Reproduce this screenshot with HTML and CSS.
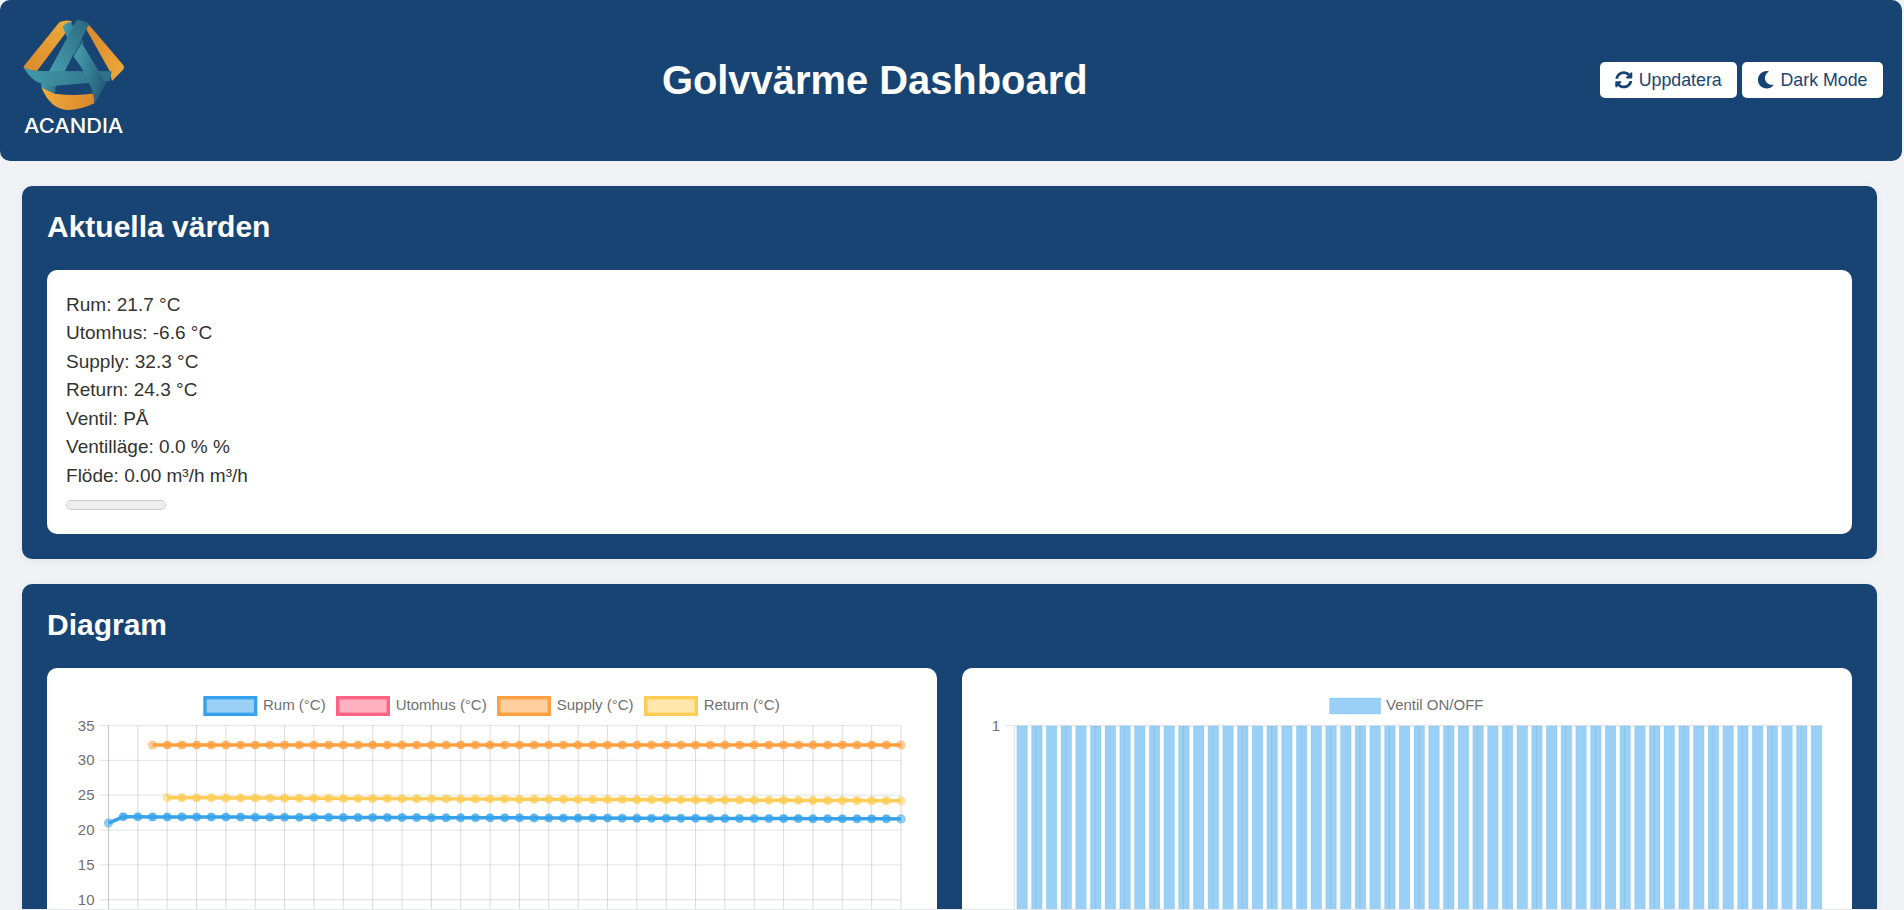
FILE: index.html
```html
<!DOCTYPE html>
<html lang="sv">
<head>
    <meta charset="UTF-8">
    <meta name="viewport" content="width=device-width, initial-scale=1.0">
    <title>Golvvärme Dashboard</title>
    <link rel="stylesheet" href="styles.css">
</head>
<body>
    <header class="top-bar">
        <svg class="logo" viewBox="60 60 375 360" role="img" aria-label="Acandia">
            <defs>
                <linearGradient id="orange-a" x1="0" y1="1" x2="1" y2="0">
                    <stop offset="0" stop-color="#db8a2c"/>
                    <stop offset="1" stop-color="#eeac3b"/>
                </linearGradient>
                <linearGradient id="orange-b" x1="0" y1="0" x2="1" y2="1">
                    <stop offset="0" stop-color="#d9862c"/>
                    <stop offset="1" stop-color="#eeac3b"/>
                </linearGradient>
                <linearGradient id="orange-c" x1="0" y1="0" x2="1" y2="0">
                    <stop offset="0" stop-color="#eeac3b"/>
                    <stop offset="1" stop-color="#d9862c"/>
                </linearGradient>
                <linearGradient id="teal-band" x1="0" y1="0" x2="1" y2="0">
                    <stop offset="0" stop-color="#429aa8"/>
                    <stop offset="1" stop-color="#2f7088"/>
                </linearGradient>
                <linearGradient id="teal-left" x1="0" y1="1" x2="1" y2="0">
                    <stop offset="0" stop-color="#46a0ad"/>
                    <stop offset="1" stop-color="#2b6781"/>
                </linearGradient>
                <linearGradient id="teal-right" x1="0" y1="0" x2="1" y2="0.4">
                    <stop offset="0" stop-color="#48a4b0"/>
                    <stop offset="1" stop-color="#27607c"/>
                </linearGradient>
            </defs>
            <path fill="url(#orange-a)" d="M178 67Q196 58 216 64L196 100L111 213Q90 212 73 206Q68 200 75 194Z"/>
            <path fill="url(#orange-b)" d="M257 85Q262 72 270 78L369 194Q375 202 369 209L336 243L329 213Z"/>
            <path fill="url(#orange-c)" d="M124 262L165 281Q225 290 285 280L283 310Q240 331 200 330Q150 326 124 262Z"/>
            <path fill="url(#teal-right)" d="M188 80Q198 68 212 66L252 128L225 172Z"/>
            <path fill="url(#teal-band)" d="M124 250L170 240L165 281L124 262Z"/>
            <path fill="url(#teal-left)" d="M230 60Q250 60 268 72L193 216H146Z"/>
            <path fill="url(#teal-band)" d="M70 201Q90 212 112 213L335 214L330 243L160 258Q130 256 108 244Q84 228 70 201Z"/>
            <path fill="url(#teal-right)" d="M221 170L246 130L318 250L283 311Q282 282 270 255Q254 212 221 170Z"/>
            <text class="logo-text" x="72" y="400" textLength="298" lengthAdjust="spacingAndGlyphs">ACANDIA</text>
        </svg>
        <h1 class="page-title">Golvvärme Dashboard</h1>
        <div class="top-actions">
            <button class="top-button">
                <svg class="button-icon" viewBox="0 0 512 512"><path d="M370.72 133.28C339.458 104.008 298.888 87.962 255.848 88c-77.458.068-144.328 53.178-162.791 126.85-1.344 5.363-6.122 9.15-11.651 9.15H24.103c-7.498 0-13.194-6.807-11.807-14.176C33.933 94.924 134.813 8 256 8c66.448 0 126.791 26.136 171.315 68.685L463.03 40.97C478.149 25.851 504 36.559 504 57.941V192c0 13.255-10.745 24-24 24H345.941c-21.382 0-32.09-25.851-16.971-40.971l41.75-41.749zM32 296h134.059c21.382 0 32.09 25.851 16.971 40.971l-41.75 41.75c31.262 29.273 71.835 45.319 114.876 45.28 77.418-.07 144.315-53.144 162.787-126.849 1.344-5.363 6.122-9.15 11.651-9.15h57.304c7.498 0 13.194 6.807 11.807 14.176C478.067 417.076 377.187 504 256 504c-66.448 0-126.791-26.136-171.315-68.685L48.97 471.03C33.851 486.149 8 475.441 8 454.059V320c0-13.255 10.745-24 24-24z"/></svg>
                Uppdatera
            </button>
            <button class="top-button">
                <svg class="button-icon" viewBox="0 0 512 512"><path d="M283.211 512c78.962 0 151.079-35.925 198.857-94.792 7.068-8.708-.639-21.43-11.562-19.35-124.203 23.654-238.262-71.576-238.262-196.954 0-72.222 38.662-138.635 101.498-174.394 9.686-5.512 7.25-20.197-3.756-22.23A258.156 258.156 0 0 0 283.211 0c-141.309 0-256 114.511-256 256 0 141.309 114.511 256 256 256z"/></svg>
                Dark Mode
            </button>
        </div>
    </header>

    <main class="content">
        <section class="panel">
            <h2>Aktuella värden</h2>
            <div class="card values">
                <div>Rum: 21.7 °C</div>
                <div>Utomhus: -6.6 °C</div>
                <div>Supply: 32.3 °C</div>
                <div>Return: 24.3 °C</div>
                <div>Ventil: PÅ</div>
                <div>Ventilläge: 0.0 % %</div>
                <div>Flöde: 0.00 m³/h m³/h</div>
                <div class="valve-bar"></div>
            </div>
        </section>

        <section class="panel panel-last">
            <h2>Diagram</h2>
            <div class="chart-grid">
                <div class="card chart-card"><svg id="temp-chart" class="chart" viewBox="0 0 890 241"></svg></div>
                <div class="card chart-card"><svg id="valve-chart" class="chart" viewBox="0 0 890 241"></svg></div>
            </div>
        </section>
    </main>

    <script src="chart.js"></script>
</body>
</html>
```

FILE: styles.css
```css
html, body {
    height: 100vh;
    overflow: hidden;
}

body {
    font-family: "Liberation Sans", Arial, sans-serif;
    margin: 0;
    padding: 0;
    background-color: #f0f2f5;
    color: #333;
}

.top-bar {
    display: flex;
    justify-content: space-between;
    align-items: center;
    box-sizing: border-box;
    width: 1902px;
    height: 161px;
    padding: 20px 19px 21px 20px;
    background-color: #184474;
    border-radius: 10px;
    color: #fff;
}

.logo {
    width: 125px;
    height: 120px;
    margin-right: 4px;
}

.logo-text {
    fill: #fff;
    font-family: Inter, sans-serif;
    font-size: 60px;
    font-weight: 500;
}

.page-title {
    margin: 0;
    font-size: 39.9px;
    font-weight: bold;
}

.top-actions {
    display: flex;
    gap: 5px;
}

.top-button {
    display: flex;
    align-items: center;
    gap: 6px;
    height: 36px;
    padding: 0 15.5px 0 14.7px;
    border: none;
    border-radius: 5px;
    background-color: #fff;
    color: #184474;
    font-family: inherit;
    font-size: 17.8px;
}

.button-icon {
    width: 17.6px;
    height: 17.6px;
    fill: currentColor;
}

.content {
    width: 1855px;
    margin-left: 22px;
    padding-top: 25px;
}

.panel {
    margin-bottom: 25px;
    padding: 25px;
    background-color: #184474;
    border-radius: 10px;
    box-shadow: 0 2px 8px rgba(0, 0, 0, 0.06);
}

/* the second panel runs on below the fold in the screenshot */
.panel-last {
    margin-bottom: 0;
    padding-bottom: 0;
    border-radius: 10px 10px 0 0;
}

.panel h2 {
    margin: 0 0 27px;
    color: #fff;
    font-size: 30px;
    line-height: 32px;
}

.card {
    background-color: #fff;
    border-radius: 10px;
}

.values {
    padding: 21px 19px 24px;
    font-size: 19.05px;
    line-height: 28.45px;
}

.valve-bar {
    box-sizing: border-box;
    width: 100px;
    height: 10px;
    margin-top: 10px;
    background-color: #eee;
    border: 1px solid #ccc;
    border-radius: 5px;
}

.chart-grid {
    display: grid;
    grid-template-columns: 1fr 1fr;
    gap: 25px;
}

.chart-card {
    border-radius: 10px 10px 0 0;
}

.chart {
    display: block;
    width: 100%;
    height: 241px;
}

.chart text {
    fill: #707070;
    font-family: "Liberation Sans", Arial, sans-serif;
}

.legend-label {
    font-size: 15px;
}

.tick-label {
    font-size: 15px;
}
```

FILE: chart.js
```js
const NS = 'http://www.w3.org/2000/svg';
const POINTS = 55;
const BLUE = '54, 162, 235';
const PINK = '255, 99, 132';
const ORANGE = '255, 159, 64';
const YELLOW = '255, 205, 86';

// all coordinates are relative to the top left of the card
const TOP = 57.5;
const BOTTOM = 241;

function add(svg, tag, attrs, text) {
    const el = document.createElementNS(NS, tag);
    Object.keys(attrs).forEach(key => el.setAttribute(key, attrs[key]));
    if (text) el.textContent = text;
    svg.appendChild(el);
    return el;
}

function hLine(svg, x1, x2, y, color) {
    add(svg, 'line', { x1: x1, x2: x2, y1: y, y2: y, stroke: color, 'stroke-width': 1.3 });
}

function vLine(svg, x, y1, y2, color) {
    add(svg, 'line', { x1: x, x2: x, y1: y1, y2: y2, stroke: color, 'stroke-width': 1.1 });
}

function legendBox(svg, x, rgb) {
    add(svg, 'rect', {
        x: x + 1.7, y: 29.7, width: 50.6, height: 16.6,
        fill: `rgba(${rgb}, 0.5)`, stroke: `rgb(${rgb})`, 'stroke-width': 3.4
    });
}

// a straight run of values from index "from" to the last point
function series(from, start, end) {
    const out = [];
    for (let i = from; i < POINTS; i++) {
        out.push({ i: i, v: start + (end - start) * (i - from) / (POINTS - 1 - from) });
    }
    return out;
}

function drawTempChart() {
    const svg = document.getElementById('temp-chart');
    const left = 61.5;
    const right = 854;
    const step = (right - left) / (POINTS - 1);
    const unit = 6.97;
    const y = v => TOP + (35 - v) * unit;

    [['Rum (°C)', 156.3, BLUE], ['Utomhus (°C)', 289, PINK], ['Supply (°C)', 450, ORANGE], ['Return (°C)', 597, YELLOW]].forEach(item => {
        legendBox(svg, item[1], item[2]);
        add(svg, 'text', { class: 'legend-label', x: item[1] + 59.7, y: 42 }, item[0]);
    });

    // only the part of the axis down to 10 is in view
    for (let v = 35; v >= 10; v -= 5) {
        hLine(svg, 52, right, y(v), 'rgba(0, 0, 0, 0.09)');
        add(svg, 'text', { class: 'tick-label', x: 47.5, y: y(v) + 5, 'text-anchor': 'end' }, String(v));
    }

    for (let i = 0; i < POINTS; i += 2) {
        vLine(svg, left + i * step, TOP, BOTTOM, i === 0 ? 'rgba(0, 0, 0, 0.22)' : 'rgba(0, 0, 0, 0.13)');
    }

    const rum = series(1, 21.9, 21.6);
    rum.unshift({ i: 0, v: 21 });

    [[rum, BLUE], [series(3, 32.2, 32.2), ORANGE], [series(4, 24.65, 24.2), YELLOW]].forEach(item => {
        const pts = item[0].map(p => `${left + p.i * step},${y(p.v)}`).join(' ');
        add(svg, 'polyline', { points: pts, fill: 'none', stroke: `rgb(${item[1]})`, 'stroke-width': 3.5 });
        item[0].forEach((p, n) => {
            // end points have a lighter middle, the line does not run through them
            const alpha = n === 0 || n === item[0].length - 1 ? 0.5 : 0.8;
            add(svg, 'circle', {
                cx: left + p.i * step, cy: y(p.v), r: 4,
                fill: `rgba(${item[1]}, ${alpha})`, stroke: `rgba(${item[1]}, 0.45)`, 'stroke-width': 1.2
            });
        });
    });
}

function drawValveChart() {
    const svg = document.getElementById('valve-chart');
    const left = 52.3;
    const right = 861.3;
    const step = (right - left) / POINTS;

    add(svg, 'rect', { x: 367.6, y: 30, width: 51, height: 16, fill: `rgba(${BLUE}, 0.5)`, stroke: `rgba(${BLUE}, 0.2)` });
    add(svg, 'text', { class: 'legend-label', x: 424, y: 42 }, 'Ventil ON/OFF');

    hLine(svg, 43, right, TOP, 'rgba(0, 0, 0, 0.09)');
    vLine(svg, left, TOP, BOTTOM, 'rgba(0, 0, 0, 0.13)');
    add(svg, 'text', { class: 'tick-label', x: 38, y: TOP + 5, 'text-anchor': 'end' }, '1');

    for (let i = 1; i < POINTS; i += 2) {
        vLine(svg, left + (i + 0.5) * step, TOP, BOTTOM, 'rgba(0, 0, 0, 0.1)');
    }

    for (let i = 0; i < POINTS; i++) {
        add(svg, 'rect', {
            x: left + (i + 0.5) * step - 4.8, y: TOP + 0.5, width: 10.6, height: BOTTOM - TOP,
            fill: `rgba(${BLUE}, 0.5)`, stroke: `rgba(${BLUE}, 0.15)`, 'stroke-width': 1
        });
    }
}

drawTempChart();
drawValveChart();
```
